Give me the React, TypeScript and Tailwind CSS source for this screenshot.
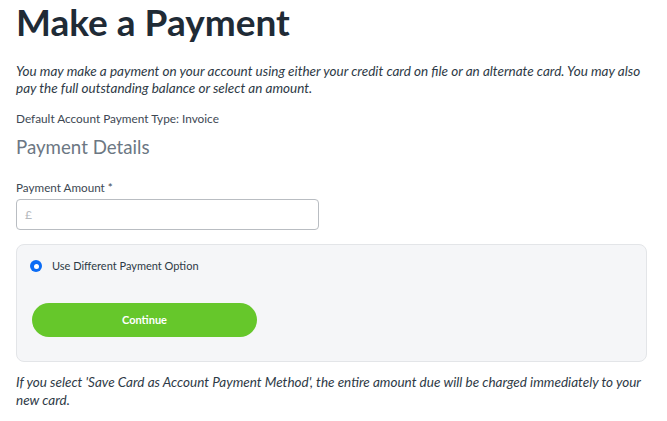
const App = () => (
  <div className="w-[667px] h-[421px] bg-white overflow-hidden" style={{ fontFamily: "Lato, 'Noto Sans', sans-serif" }}>
    <div className="pl-4 pr-5">
      <h1 className="text-[37px] leading-[40px] font-bold text-[#1f2b36] pt-[2px]">Make a Payment</h1>
      <p className="mt-[21px] text-[13.5px] leading-[17px] italic text-[#2e3a46]">
        You may make a payment on your account using either your credit card on file or an alternate card. You may also pay the full outstanding balance or select an amount.
      </p>
      <p className="mt-[15px] text-[11.8px] leading-[14px] text-[#3d4853]">Default Account Payment Type: Invoice</p>
      <h2 className="mt-[9px] text-[18.7px] leading-[24px] text-[#6c7783]">Payment Details</h2>
      <label className="block mt-[21px] text-[11.7px] leading-[14px] text-[#3d4853]">Payment Amount *</label>
      <div className="mt-[5px] w-[303px] h-[31px] border border-[#b9bdc2] rounded-[4px] flex items-center px-2 text-[12px] text-[#b5b9bd]">£</div>
      <div className="mt-[14px] h-[118px] border border-[#e3e5e8] bg-[#f5f6f8] rounded-[8px] px-4 pt-[14px]">
        <div className="flex items-center gap-[10px] -ml-[3px]">
          <span className="w-[12px] h-[12px] rounded-full bg-[#0b6cf5] flex items-center justify-center">
            <span className="w-[5px] h-[5px] rounded-full bg-white" />
          </span>
          <span className="text-[11px] leading-[14px] text-[#2e3a46]">Use Different Payment Option</span>
        </div>
        <button className="mt-[30px] -ml-[1px] w-[225px] h-[34px] rounded-full bg-[#66c72b] text-white text-[11px] font-bold">Continue</button>
      </div>
      <p className="mt-[11px] text-[13.5px] leading-[18px] italic text-[#2e3a46]">
        If you select 'Save Card as Account Payment Method', the entire amount due will be charged immediately to your new card.
      </p>
    </div>
  </div>
);
export default App;
